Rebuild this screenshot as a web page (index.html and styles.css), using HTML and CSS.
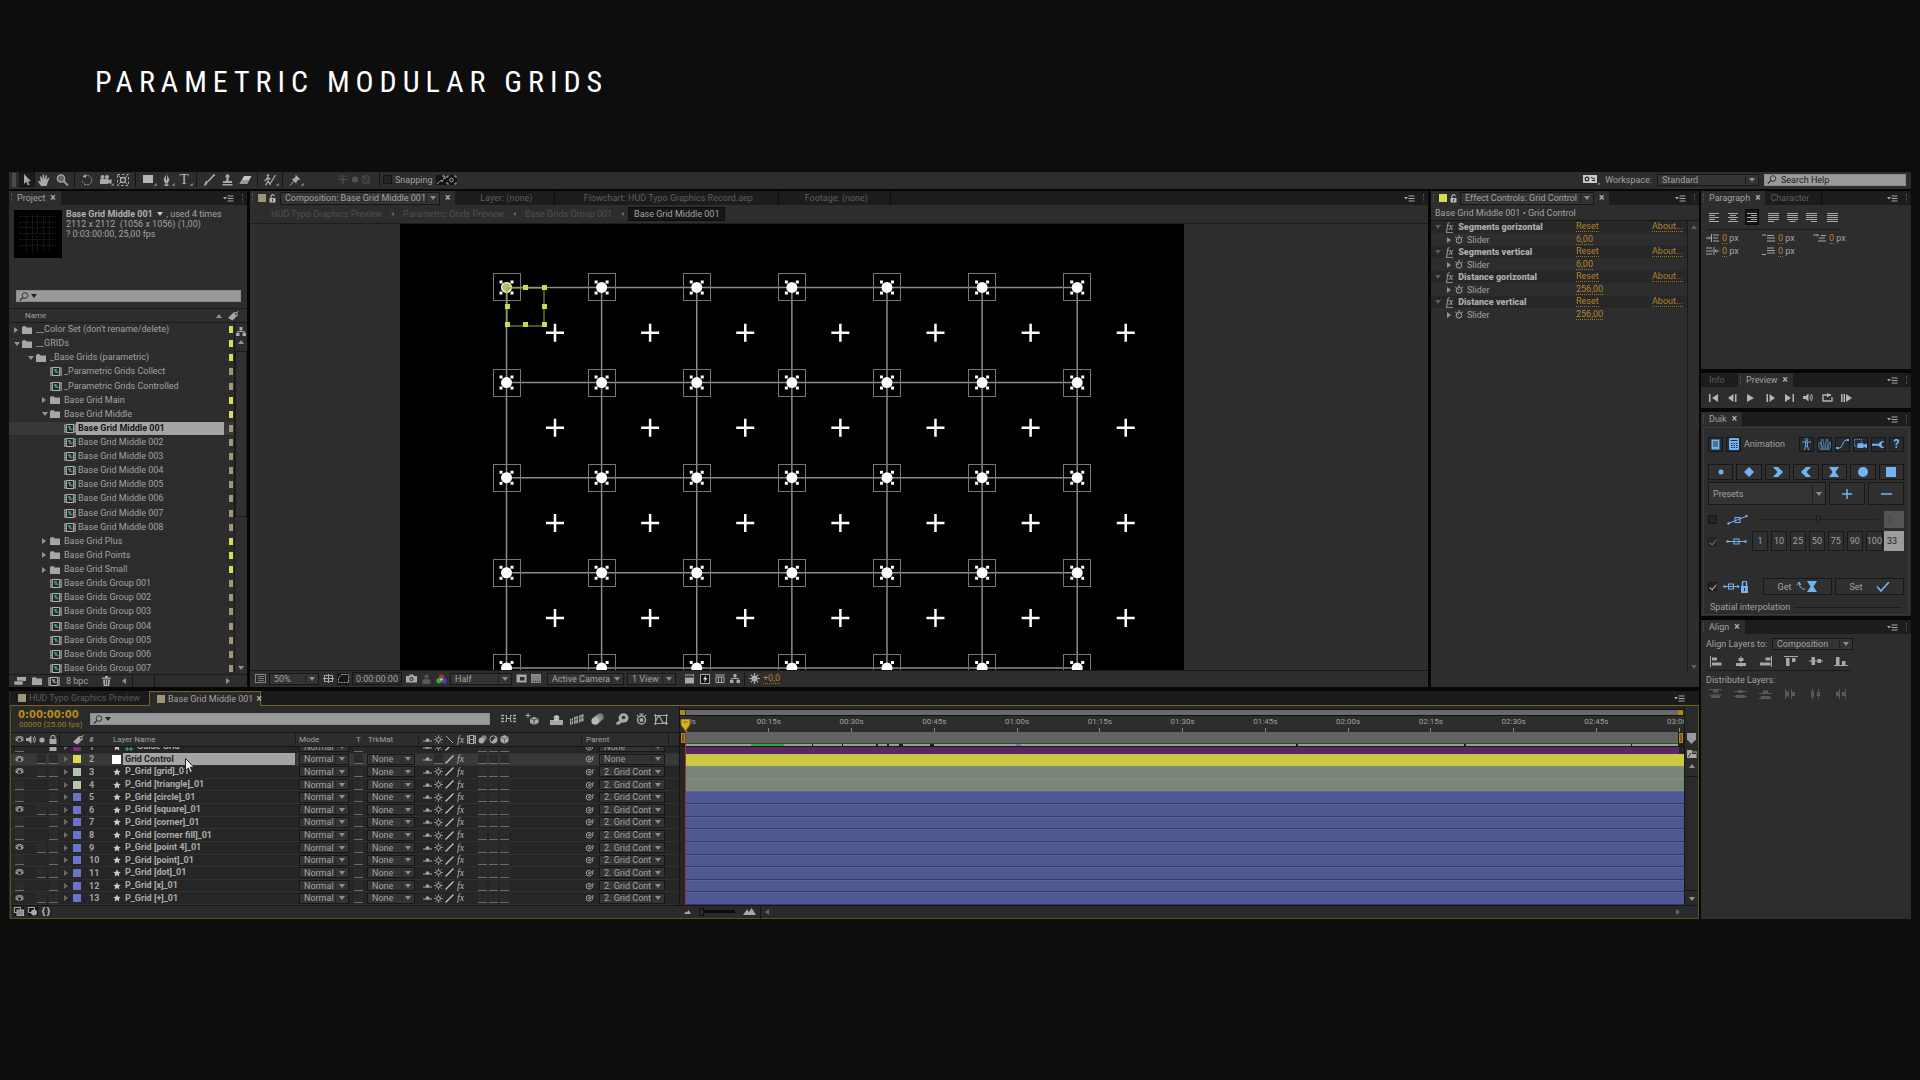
FILE: index.html
```html
<!DOCTYPE html>
<html lang="en">
<head>
<meta charset="utf-8">
<title>Parametric Modular Grids</title>
<link rel="stylesheet" href="styles.css">
</head>
<body>
<header class="title"><h1>PARAMETRIC MODULAR GRIDS</h1></header>
<main class="app">
  <nav class="toolbar" aria-label="Tools">
    <div class="tools">
      <span class="grip-bar"></span>
      <button class="tool on" data-icon="arrow" aria-label="Selection"></button>
      <button class="tool" data-icon="hand" aria-label="Hand"></button>
      <button class="tool" data-icon="zoom" aria-label="Zoom"></button>
      <span class="vsep"></span>
      <button class="tool" data-icon="rotate" aria-label="Rotate"></button>
      <button class="tool sub" data-icon="camera" aria-label="Camera"></button>
      <button class="tool" data-icon="pan" aria-label="Pan behind"></button>
      <span class="vsep"></span>
      <button class="tool sub" data-icon="rect" aria-label="Rectangle"></button>
      <button class="tool sub" data-icon="pen" aria-label="Pen"></button>
      <button class="tool sub type" aria-label="Type">T</button>
      <span class="vsep"></span>
      <button class="tool" data-icon="brush" aria-label="Brush"></button>
      <button class="tool" data-icon="stamp" aria-label="Clone stamp"></button>
      <button class="tool" data-icon="eraser" aria-label="Eraser"></button>
      <span class="vsep"></span>
      <button class="tool sub" data-icon="roto" aria-label="Roto brush"></button>
      <span class="vsep"></span>
      <button class="tool sub" data-icon="pin" aria-label="Puppet pin"></button>
    </div>
    <div class="axes"><span data-icon="axis1"></span><span data-icon="axis2"></span><span data-icon="axis3"></span></div>
    <span class="vsep"></span>
    <label class="snap"><input type="checkbox" class="chk"> Snapping</label>
    <span class="dark" data-icon="snap1"></span><span class="dark" data-icon="snap2"></span>
    <div class="right">
      <span data-icon="wsicon"></span>
      <label for="ws">Workspace:</label>
      <span class="sel ws"><select id="ws"><option>Standard</option></select></span>
      <span class="search help"><span data-icon="mag"></span><input type="text" value="Search Help" aria-label="Search Help"></span>
    </div>
  </nav>

  <div class="left">
    <div class="top">
      <section class="panel project">
        <div class="tabs"><div class="tab on"><i class="grip"></i>Project<b>×</b></div><span class="menu" data-icon="menu"></span><i class="grip end"></i></div>
        <div class="info">
          <svg class="thumb" viewBox="0 0 48 48" aria-hidden="true"><rect width="48" height="48" fill="#000"/><path d="M5 6.500h37M5 12.500h37M5 17.500h37M5 23.500h37M5 29.500h37M5 35.500h37M12.500 5v37M18.500 5v37M23.500 5v37M29.500 5v37M35.500 5v37" stroke="#1b1b1b" stroke-dasharray="3 1"/></svg>
          <p><strong>Base Grid Middle 001</strong> <i class="dn"></i> , used 4 times<br>2112 x 2112&nbsp; (1056 x 1056) (1,00)<br>? 0:03:00:00, 25,00 fps</p>
        </div>
        <label class="search find"><span data-icon="mag"></span><i class="dn"></i><input type="text" aria-label="Search project"></label>
        <div class="treehead"><span>Name</span><i class="up"></i><span class="tagc" data-icon="tag"></span></div>
        <div class="treewrap">
          <div class="clip"><ul class="tree" id="tree"></ul></div>
          <div class="vscroll"><span data-icon="flow"></span><i class="up"></i><div class="thumbbar"></div><i class="dn"></i></div>
        </div>
        <div class="pfoot"><span data-icon="interp"></span><span data-icon="folder"></span><span data-icon="compgray"></span><span class="bpc">8 bpc</span><span data-icon="trash"></span><i class="lf"></i><div class="hthumb"></div><i class="rt"></i></div>
      </section>

      <section class="panel comp">
        <div class="tabs">
          <div class="tab on"><i class="grip"></i><i class="sw tan"></i><span data-icon="lock"></span><span class="sel ctab"><select aria-label="Composition"><option>Composition: Base Grid Middle 001</option></select></span><b>×</b></div>
          <div class="tab t1">Layer: (none)</div><div class="tab t2">Flowchart: HUD Typo Graphics Record.aep</div><div class="tab t3">Footage: (none)</div>
          <span class="menu" data-icon="menu"></span><i class="grip end"></i>
        </div>
        <div class="crumbs"><a href="#">HUD Typo Graphics Preview</a><i class="lf"></i><a href="#">Parametric Grids Preview</a><i class="lf"></i><a href="#">Base Grids Group 001</a><i class="lf"></i><a href="#" class="cur">Base Grid Middle 001</a></div>
        <div class="viewer"><svg id="canvas" width="784" height="446" viewBox="400 224 784 446" role="img" aria-label="Composition view"></svg></div>
        <div class="vfoot">
          <span data-icon="mon"></span>
          <span class="sel w50"><select aria-label="Zoom"><option>50%</option></select></span>
          <span data-icon="safe"></span><span class="dark" data-icon="mask"></span>
          <button class="time">0:00:00:00</button>
          <span data-icon="photo"></span><span class="faint" data-icon="person"></span><span data-icon="rgb"></span>
          <span class="sel w62"><select aria-label="Resolution"><option>Half</option></select></span>
          <span data-icon="roi"></span><span data-icon="check"></span>
          <span class="sel w77"><select aria-label="Camera"><option>Active Camera</option></select></span>
          <span class="sel w49"><select aria-label="Views"><option>1 View</option></select></span>
          <span class="par" data-icon="par"></span><span data-icon="fast"></span><span data-icon="tl"></span><span data-icon="flow"></span><span class="vsep"></span><span data-icon="sun"></span><a class="val" href="#">+0,0</a>
        </div>
      </section>

      <section class="panel fx">
        <div class="tabs"><div class="tab on"><i class="grip"></i><i class="sw yel"></i><span data-icon="lock"></span><span class="sel ftab"><select aria-label="Effect Controls"><option>Effect Controls: Grid Control</option></select></span><b>×</b></div><span class="menu" data-icon="menu"></span><i class="grip end"></i></div>
        <div class="fxname">Base Grid Middle 001 • Grid Control</div>
        <div class="fxwrap"><div class="fxrows" id="fx"></div><div class="vscroll"><i class="up"></i><i class="dn"></i></div></div>
      </section>
    </div>

    <section class="timeline">
      <div class="tltabs">
        <div class="tab"><i class="sw tan"></i>HUD Typo Graphics Preview</div>
        <div class="tab on"><i class="sw tan"></i>Base Grid Middle 001<b>×</b></div>
        <div class="rest"><span class="menu" data-icon="menu"></span></div>
      </div>
      <div class="tlbody">
        <div class="layers">
          <div class="tlhead">
            <div class="tc"><strong>0:00:00:00</strong><small>00000 (25.00 fps)</small></div>
            <label class="search lfind"><span data-icon="mag"></span><i class="dn"></i><input type="text" aria-label="Search layers"></label>
            <div class="tlicons"><span data-icon="mini"></span><span data-icon="draft"></span><span data-icon="shy"></span><span data-icon="blend"></span><span data-icon="blur"></span><span data-icon="brain"></span><span data-icon="watchbig"></span><span data-icon="graph"></span></div>
          </div>
          <table>
            <thead><tr><th data-icon="eye"></th><th data-icon="speaker"></th><th data-icon="dot"></th><th data-icon="padlock"></th><th class="ls"></th><th data-icon="tag"></th><th class="num">#</th><th class="nm">Layer Name</th><th class="ls md">Mode</th><th class="tt">T</th><th class="tk">TrkMat</th><th class="ls sws"><span data-icon="shysw"></span><span data-icon="sunsw"></span><span data-icon="slashb"></span><em>fx</em><span data-icon="film"></span><span data-icon="blursw"></span><span data-icon="adj"></span><span data-icon="cube"></span></th><th class="ls pr">Parent</th><th class="ls"></th></tr></thead>
            <tbody id="layers"></tbody>
          </table>
        </div>
        <div class="graph">
          <div class="nav"><i></i><div></div><i></i></div>
          <div class="ruler" id="ruler"></div>
          <div class="work"><i></i><div class="area"><div class="cache" id="cache"></div></div><i></i></div>
          <div class="bars" id="bars"></div>
          <span class="cti" data-icon="cti"></span>
        </div>
        <div class="tscroll"><span class="mk" data-icon="shield"></span><span data-icon="cbtn"></span><i class="up"></i><div class="track"></div><i class="dn"></i></div>
      </div>
      <div class="tlfoot"><div class="lft"><span class="dark" data-icon="tg1"></span><span class="dark" data-icon="tg2"></span><span data-icon="tg3"></span></div><span data-icon="mt1"></span><input type="range" class="zoomr" min="0" max="100" value="0" aria-label="Timeline zoom"><span data-icon="mt2"></span><span class="vsep"></span><i class="lf"></i><i class="rt"></i></div>
      <span class="cursor" data-icon="cursor"></span>
    </section>
  </div>

  <aside class="side">
    <section class="panel para">
      <div class="tabs"><div class="tab on"><i class="grip"></i>Paragraph<b>×</b></div><div class="tab ch">Character</div><span class="menu" data-icon="menu"></span><i class="grip end"></i></div>
      <div class="aligns"><button data-icon="al1" aria-label="Left"></button><button data-icon="al2" aria-label="Center"></button><button class="on" data-icon="al3" aria-label="Right"></button><button class="g" data-icon="al4" aria-label="Justify last left"></button><button data-icon="al5" aria-label="Justify last center"></button><button data-icon="al6" aria-label="Justify last right"></button><button class="g" data-icon="al7" aria-label="Justify all"></button></div>
      <div class="indents"><span data-icon="in1"></span><p><a class="val" href="#">0</a> px</p><span data-icon="in2"></span><p><a class="val" href="#">0</a> px</p><span data-icon="in3"></span><p><a class="val" href="#">0</a> px</p><span data-icon="in4"></span><p><a class="val" href="#">0</a> px</p><span data-icon="in5"></span><p><a class="val" href="#">0</a> px</p></div>
    </section>
    <section class="panel prev">
      <div class="tabs"><div class="tab inf">Info</div><div class="tab on"><i class="grip"></i>Preview<b>×</b></div><span class="menu" data-icon="menu"></span><i class="grip end"></i></div>
      <div class="play"><button data-icon="p1" aria-label="First frame"></button><button data-icon="p2" aria-label="Previous frame"></button><button data-icon="p3" aria-label="Play"></button><button data-icon="p4" aria-label="Next frame"></button><button data-icon="p5" aria-label="Last frame"></button><button data-icon="speaker" aria-label="Audio"></button><button data-icon="loop" aria-label="Loop"></button><button data-icon="ram" aria-label="RAM preview"></button></div>
    </section>
    <section class="panel duik">
      <div class="tabs"><div class="tab on"><i class="grip"></i>Duik<b>×</b></div><span class="menu" data-icon="menu"></span><i class="grip end"></i></div>
      <div class="dbody">
        <div class="drow d1"><button data-icon="doc" aria-label="Notes"></button><button data-icon="calc" aria-label="Calculator"></button><span class="an">Animation</span><button data-icon="man" aria-label="Rigging"></button><button data-icon="palm" aria-label="Automation"></button><button data-icon="curve" aria-label="Animation"></button><button data-icon="cam2" aria-label="Camera"></button><button data-icon="wrench" aria-label="Settings"></button><button class="q" aria-label="Help">?</button></div>
        <div class="drow d2"><button data-icon="k1" aria-label="Roving"></button><button data-icon="k2" aria-label="Linear"></button><button data-icon="k3" aria-label="Ease in"></button><button data-icon="k4" aria-label="Ease out"></button><button data-icon="k5" aria-label="Easy ease"></button><button data-icon="k6" aria-label="Continuous"></button><button data-icon="k7" aria-label="Hold"></button></div>
        <div class="drow d3"><span class="sel pres"><select aria-label="Presets"><option>Presets</option></select></span><button data-icon="plus" aria-label="Add"></button><button data-icon="minus" aria-label="Remove"></button></div>
        <div class="drow d4"><input type="checkbox" class="chk" aria-label="Velocity"><span data-icon="vel1"></span><input type="range" class="rng" value="50" aria-label="Velocity value"><input type="text" class="nv off" value="0" aria-label="Velocity number"></div>
        <div class="drow d5"><input type="checkbox" class="chk dis" checked aria-label="Influence"><span data-icon="vel2"></span><button>1</button><button>10</button><button>25</button><button>50</button><button>75</button><button>90</button><button>100</button><input type="text" class="nv" value="33" aria-label="Influence number"></div>
        <div class="drow d6"><input type="checkbox" class="chk" checked aria-label="Lock influence"><span data-icon="vel3"></span><button>Get <span data-icon="getk"></span></button><button>Set <span data-icon="tick"></span></button></div>
        <div class="spat">Spatial interpolation<i></i></div>
      </div>
    </section>
    <section class="panel align">
      <div class="tabs"><div class="tab on"><i class="grip"></i>Align<b>×</b></div><span class="menu" data-icon="menu"></span><i class="grip end"></i></div>
      <div class="alto"><label for="alto">Align Layers to:</label><span class="sel wal"><select id="alto"><option>Composition</option></select></span></div>
      <div class="aicons"><button data-icon="a1" aria-label="Align left"></button><button data-icon="a2" aria-label="Align center"></button><button data-icon="a3" aria-label="Align right"></button><button data-icon="a4" aria-label="Align top"></button><button data-icon="a5" aria-label="Align middle"></button><button data-icon="a6" aria-label="Align bottom"></button></div>
      <p class="dist">Distribute Layers:</p>
      <div class="aicons dim"><button data-icon="b1" aria-label="Distribute top"></button><button data-icon="b2" aria-label="Distribute middle"></button><button data-icon="b3" aria-label="Distribute bottom"></button><button data-icon="b4" aria-label="Distribute left"></button><button data-icon="b5" aria-label="Distribute center"></button><button data-icon="b6" aria-label="Distribute right"></button></div>
    </section>
  </aside>
</main>
<script src="app.js"></script>
</body>
</html>
```
FILE: styles.css
```css
* { box-sizing: border-box; }
body { margin: 0; background: #0d0d0d; color: #a2a2a2; font: 9px/12px Roboto, "Liberation Sans", sans-serif; overflow-x: hidden; }
button, input, select { font: inherit; color: inherit; margin: 0; padding: 0; border: 0; background: none; outline: 0; }
a { color: inherit; text-decoration: none; }
p, ul, h1 { margin: 0; padding: 0; }
svg { display: block; }
[data-icon] { display: flex; align-items: center; justify-content: center; flex: none; color: #a8a8a8; }

.title { padding: 64px 95px 72px; }
.title h1 { font: 400 30px/36px "Roboto Condensed", Roboto, sans-serif; letter-spacing: 6px; color: #fff; }

.app { margin: 0 9px; display: grid; grid-template-columns: minmax(0, 1fr) 210px; gap: 2px; background: #060606; }

/* triangles */
.dn, .up, .lf, .rt { display: inline-block; width: 0; height: 0; border: 3px solid transparent; flex: none; }
.dn { border-top: 4px solid #929292; border-bottom: 0; }
.up { border-bottom: 4px solid #929292; border-top: 0; }
.lf { border-right: 4px solid #929292; border-left: 0; }
.rt { border-left: 4px solid #929292; border-right: 0; }

/* toolbar */
.toolbar { grid-column: 1 / -1; height: 17px; padding-bottom: 2px; background: #2d2d2d; display: flex; align-items: center; }
.tools { display: flex; align-items: center; width: 329px; }
.tool { width: 18px; height: 15px; position: relative; }
.tool.on { background: #1c1c1c; border: 1px solid #111; width: 16px; }
.tool.sub::after { content: ""; position: absolute; right: 0; bottom: 0; border: 2px solid transparent; border-left-color: #999; border-right: 0; transform: rotate(45deg); }
.type { font: 15px/15px "Liberation Serif", serif; color: #b4b4b4; }
.grip-bar { width: 4px; height: 14px; background: #4c4c4c; margin: 0 3px; }
.vsep { width: 1px; height: 15px; background: #161616; margin: 0 3px; flex: none; }
.axes { display: flex; gap: 3px; width: 38px; opacity: .3; }
.snap { display: flex; align-items: center; gap: 3px; margin-right: 3px; }
.dark { background: #141414; }
.right { margin-left: auto; display: flex; align-items: center; gap: 5px; padding-right: 5px; }
.right [data-icon="wsicon"] { color: #c8c8c8; }

.chk { appearance: none; width: 9px; height: 9px; background: #232323; border: 1px solid #141414; display: grid; place-items: center; flex: none; }
.chk:checked::after { content: ""; width: 3px; height: 6px; border: solid #b5b5b5; border-width: 0 1px 1px 0; transform: rotate(40deg); }
.chk.dis { opacity: .5; }

.sel { position: relative; display: flex; background: #333; border: 1px solid #161616; height: 12px; flex: none; align-items: center; box-shadow: 0 0 0 1px #353535 inset; }
.sel select { appearance: none; width: 100%; height: 10px; line-height: 10px; padding: 0 12px 0 4px; }
.sel::before { content: ""; position: absolute; right: 12px; top: 1px; bottom: 1px; border-left: 1px solid #1e1e1e; }
.sel::after { content: ""; position: absolute; right: 3px; border: 3px solid transparent; border-top: 4px solid #8c8c8c; border-bottom: 0; }
.ws { width: 102px; }
.search { background: #9b9a9b; display: flex; align-items: center; gap: 2px; padding-left: 2px; height: 12px; border: 1px solid #8a8a8a; color: #1c1c1c; }
.search input { flex: 1; min-width: 0; }
.search [data-icon] { color: #333; }
.search .dn { border-top-color: #222; }
.help { width: 142px; gap: 4px; }

/* panels */
.left { display: flex; flex-direction: column; gap: 4px; min-width: 0; }
.top { display: grid; grid-template-columns: 238px minmax(0, 1fr) 268px; gap: 3px; }
.panel { background: #2d2d2d; min-width: 0; display: flex; flex-direction: column; }
.tabs { background: #1c1c1c; height: 14px; display: flex; align-items: center; flex: none; }
.tab { height: 14px; display: flex; align-items: center; padding: 0 5px 0 8px; color: #5c5c5c; white-space: nowrap; }
.tab.on { background: #2d2d2d; color: #a2a2a2; padding-left: 2px; }
.tab b { font-weight: 700; font-size: 10px; margin-left: 5px; color: #b0b0b0; }
.grip { width: 2px; height: 8px; border-left: 1px dotted #555; margin-right: 4px; }
.grip.end { margin: 0 3px 0 8px; }
.menu { margin-left: auto; }
.sw { width: 8px; height: 8px; flex: none; }
.tan { background: #a1947b; }
.yel { background: #d9dd52; }

/* project */
.info { display: flex; height: 85px; padding: 5px 5px; gap: 4px; }
.info p { line-height: 10px; white-space: nowrap; margin-top: -1px; }
.info strong { color: #b0b0b0; }
.thumb { width: 48px; height: 48px; }
.info .dn { border-top-color: #ccc; margin: 0 1px 1px 2px; }
.find { margin: 0 6px 0 7px; }
.treehead { margin-top: 6px; height: 15px; border: solid #1a1a1a; border-width: 1px 0; display: flex; align-items: center; padding: 0 8px 0 16px; gap: 6px; font-size: 8px; }
.treehead .up { margin-left: auto; }
.treewrap { display: flex; height: 351px; }
.clip { flex: 1; overflow: hidden; border-right: 1px solid #191919; }
.tree { list-style: none; height: 353px; display: grid; grid-auto-rows: 1fr; }
.tree li { display: flex; align-items: center; white-space: nowrap; border-bottom: 1px solid #292929; padding-right: 1px; }
.tree .ar { width: 8px; display: flex; }
.tree .fic { width: 14px; justify-content: flex-start; }
.tree .nme { flex: 1; margin-right: 5px; line-height: 13px; }
.tree .sel1 { background: #383838; }
.tree .sel1 .nme { background: #a4a3a5; color: #141414; font-weight: 700; padding-left: 2px; margin-left: -2px; }
.tree .lb { width: 4px; height: 7px; }
.l0 { padding-left: 5px; } .l1 { padding-left: 19px; } .l2 { padding-left: 33px; } .l3 { padding-left: 47px; }
.vscroll { width: 12px; display: flex; flex-direction: column; align-items: center; padding: 4px 0 4px; gap: 4px; }
.vscroll .thumbbar { width: 12px; height: 166px; border: 1px solid #191919; background: #303030; margin-top: 3px; }
.vscroll .dn { margin-top: auto; }
.pfoot { height: 13px; border-top: 1px solid #1a1a1a; display: flex; align-items: center; padding: 0 17px 0 5px; gap: 6px; }
.pfoot .bpc { width: 30px; }
.pfoot .lf { margin-left: 5px; }
.pfoot .hthumb { width: 23px; height: 12px; border: solid #161616; border-width: 0 1px; }
.pfoot .rt { margin-left: auto; }

/* composition */
.ctab { width: 160px; margin-left: 4px; height: 13px; }
.comp [data-icon="lock"], .fx [data-icon="lock"] { margin-left: 3px; }
.tab.t1, .tab.t2, .tab.t3 { justify-content: center; border-right: 1px solid #0e0e0e; }
.t1 { width: 100px; } .t2 { width: 224px; } .t3 { width: 112px; }
.crumbs { height: 19px; display: flex; align-items: center; padding-left: 21px; gap: 9px; border-bottom: 1px solid #1d1d1d; color: #505050; white-space: nowrap; }
.crumbs .lf { border-width: 2px 3px 2px 0; border-right-color: #666; }
.crumbs .cur { margin-left: -5px; padding: 0 5px; background: #171717; border: 1px solid #0d0d0d; color: #a2a2a2; }
.viewer { height: 446px; padding-left: 150px; overflow: hidden; background: #2e2e2e; }
#canvas { background: #000; }
.vfoot { height: 17px; border-top: 1px solid #161616; display: flex; align-items: center; padding: 0 0 1px 4px; gap: 3px; white-space: nowrap; }
.w50 { width: 50px; } .w62 { width: 62px; } .w77 { width: 77px; margin-left: 2px; } .w49 { width: 49px; }
.vfoot .time { border: 1px solid #161616; height: 13px; width: 50px; }
.vfoot [data-icon] { width: 12px; height: 12px; }
.vfoot .par { margin: 0 1px 0 4px; }
.vfoot .faint { opacity: .35; }
.vfoot .vsep { margin: 0; }
.val { color: #b4842c; border-bottom: 1px dotted #9c7428; line-height: 9px; }

/* effect controls */
.ftab { width: 134px; margin-left: 3px; height: 13px; }
.fxname { height: 16px; line-height: 16px; padding-left: 4px; border-bottom: 1px solid #161616; }
.fxwrap { flex: 1; display: flex; }
.fxwrap .vscroll { border-left: 1px solid #191919; margin-bottom: 14px; }
.fxwrap .up, .fxwrap .dn { opacity: .5; }
.fxrows { flex: 1; }
.fxrows > div { display: grid; grid-template-columns: 145px 1fr 35px; align-items: center; height: 13px; }
.fxrows > .h { background: #272727; height: 12px; font-weight: 700; }
.fxrows .c { display: flex; align-items: center; gap: 5px; padding-left: 4px; }
.fxrows .p .c { padding-left: 16px; gap: 4px; }
.fxrows .h strong { color: #acacac; }
.fxrows .val { justify-self: start; font-weight: 400; }
em { font: italic 10px/10px "Liberation Serif", serif; border-bottom: 1px solid #888; color: #b4b4b4; }

/* timeline */
.timeline { position: relative; display: flex; flex-direction: column; background: #2a2a2a; }
.tltabs { display: flex; background: #1b1b1b; height: 15px; margin-left: 1px; }
.tltabs .tab { height: 15px; border-bottom: 1px solid #756425; gap: 3px; width: 139px; }
.tltabs .on { border: 1px solid #756425; border-bottom: 0; padding: 0 2px 0 7px; width: 112px; background: #2a2a2a; }
.tltabs .on b { margin-left: 0; }
.rest { flex: 1; border-bottom: 1px solid #756425; display: flex; align-items: center; padding-right: 14px; }
.tlbody { display: grid; grid-template-columns: 669px minmax(0, 1fr) 14px; border: solid #5b4f24; border-width: 0 1px; margin-left: 1px; }
.layers { border-right: 1px solid #141414; overflow: hidden; }
.tlhead { height: 26px; display: flex; align-items: center; padding-left: 7px; }
.tc { width: 72px; line-height: 10px; }
.tc strong { display: block; font: 700 10px/11px "DejaVu Sans", sans-serif; color: #b98c14; }
.tc small { font-size: 8px; color: #a07a1c; padding-left: 1px; line-height: 10px; display: block; }
.lfind { width: 400px; }
.tlicons { display: flex; gap: 7px; margin-left: 10px; }
.tlicons [data-icon="shy"], .tlicons [data-icon="brain"] { margin-left: 4px; }
table { display: block; }
thead, tbody { display: block; }
tr { display: grid; grid-template-columns: 14px 11px 11px 12px 13px 12px 27px 186px 53px 16px 52px 163px 87px 11px; align-items: center; }
th, td { padding: 0; text-align: left; font-weight: 400; min-width: 0; }
thead tr { height: 15px; background: #2d2d2d; border: solid #161616; border-width: 1px 0; font-size: 8px; line-height: 13px; }
th.ls { border-left: 1px solid #191919; height: 11px; line-height: 11px; }
.num { padding-left: 5px; font-weight: 700; }
.nm { display: flex; align-items: center; }
th.nm, th.tk { padding-left: 2px; }
th.md { padding-left: 3px; margin-left: -2px; }
th.tt { padding-left: 6px; }
th.pr { padding-left: 4px; }
.sws { display: grid; grid-template-columns: repeat(8, 11px); justify-items: center; align-items: center; padding-left: 4px; }
th.sws { padding-left: 3px; }
.sws em { border: 0; }
tbody { height: 158px; display: flex; flex-direction: column; justify-content: flex-end; overflow: hidden; background: #262626; }
tbody tr { flex: 0 0 8%; min-height: 0; max-height: 8%; grid-template-rows: 100%; border-bottom: 1px solid #303030; }
tbody .selrow { background: #393939; }
tbody td:nth-child(-n+4), tbody .tt { display: flex; justify-content: center; }
tbody td:first-child, thead th:first-child { padding-left: 2px; }
.box { width: 9px; height: 10px; background: #2b2b2b; border-bottom: 1px solid #6c6c6c; display: flex; align-items: center; justify-content: center; }
.arc { display: flex; padding-left: 5px; }
.arc .rt { border-left-color: #6c6c6c; }
.lab { width: 8px; height: 8px; margin-left: 1px; }
td.nm { padding-right: 2px; }
td.nm > span { width: 12px; }
td.nm strong { flex: 1; color: #acacac; line-height: 11px; padding-left: 2px; white-space: nowrap; }
.selrow td.nm strong { background: #a3a3a3; color: #222; line-height: 12px; }
.nullb { width: 9px !important; height: 9px; background: #fff; margin: 0 2px 0 1px; }
tbody .sel { width: 50px; height: 11px; margin-left: 2px; }
tbody .sel::before { border-color: #262626; }
tbody td.tk .sel { width: 48px; margin-left: 1px; }
tbody .pr { display: flex; align-items: center; gap: 5px; padding-left: 4px; }
tbody .pr .sel { width: 66px; margin: 0; }
.graph { position: relative; overflow: hidden; background: #262626; }
.nav { margin-top: 3px; height: 7px; background: #6a6a6a; border: solid #111; border-width: 1px 0; display: flex; justify-content: space-between; }
.nav i { width: 6px; background: #b0851c; border-right: 1px solid #333; }
.ruler { height: 16px; display: flex; background: #2d2d2d; font-size: 8px; line-height: 12px; }
.ruler div { flex: 0 0 calc((100% - 11px) / 12); text-align: center; }
.ruler div:first-child { margin-left: calc((100% - 11px) / -24 + 6px); }
.ruler div::after { content: ""; display: block; width: 1px; height: 4px; background: #888; margin: 0 auto; }
.work { height: 15px; display: flex; justify-content: space-between; border-bottom: 1px solid #161616; background: #1e1e1e; }
.work > i { width: 4px; margin: 1px 1px 3px; background: #7a5c17; border: 1px solid #b0851c; }
.work .area { flex: 1; background: #626262; position: relative; }
.cache { position: absolute; left: 0; right: 0; bottom: 0; height: 3px; background: #8da88c; border-top: 1px solid #3b463b; }
.cache i { position: absolute; top: 0; bottom: 0; }
.bars { height: 158px; display: flex; flex-direction: column; justify-content: flex-end; overflow: hidden; padding-left: 6px; background: #262626; }
.bars div { flex: 0 0 8%; border-bottom: 1px solid #343a64; border-top: 1px solid #5a6299; background: #505894; }
.bars .pu { background: #5b2762; border: 0; margin-right: 5px; }
.bars .ye { background: #cdc842; border-color: #c8c15c #55551f; }
.bars .gr { background: #7a8678; border-color: #7f8b80 #4d574c; }
.cti { position: absolute; left: 1px; top: 13px; }
.cti svg { position: relative; z-index: 1; }
.cti::after { content: ""; position: absolute; left: 4px; top: 0; height: 190px; width: 1px; background: #a82c3c; }
.tscroll { display: flex; flex-direction: column; align-items: center; padding: 27px 1px 4px; gap: 6px; border-left: 1px solid #161616; }
.tscroll .up { margin-top: -1px; }
.tscroll .track { flex: 1; width: 12px; border: solid #151515; border-width: 1px 0; margin-top: 2px; }
.tlfoot { height: 14px; border: solid #5b4f24; border-width: 0 1px 1px; margin-left: 1px; display: flex; align-items: center; gap: 8px; box-shadow: 0 1px #161616 inset; padding-right: 18px; }
.lft { width: 665px; display: flex; gap: 4px; padding-left: 3px; }
.zoomr { appearance: none; width: 36px; height: 10px; background: linear-gradient(#0c0c0c, #0c0c0c) 0 50% / 100% 3px no-repeat; }
.zoomr::-webkit-slider-thumb { appearance: none; width: 5px; height: 8px; background: #2a2a2a; border: 1px solid #111; }
.tlfoot .rt { margin-left: auto; opacity: .6; }
.tlfoot .lf { opacity: .6; }
.tlfoot .vsep { margin: 0 -4px; }
.cursor { position: absolute; left: 176px; top: 67px; }

/* side column */
.side { display: flex; flex-direction: column; gap: 4px; }
.para { height: 178px; }
.tab.ch { border-right: 1px solid #0e0e0e; width: 57px; padding-left: 5px; }
.aligns { display: flex; gap: 5px; padding: 4px 0 4px; margin: 0 71px 0 6px; border-bottom: 1px solid #1a1a1a; }
.aligns button { width: 14px; height: 16px; }
.aligns .on { background: #161616; border: 1px solid #0a0a0a; }
.aligns .g { margin-left: 2px; }
.indents { display: grid; grid-template-columns: 13px 37px 13px 32px 13px 1fr; column-gap: 3px; row-gap: 1px; padding: 2px 5px; align-items: center; }
.inf { width: 37px; }
.play { height: 21px; display: flex; align-items: center; padding-left: 3px; gap: 1px; }
.play button { width: 18px; height: 15px; color: #b4b4b4; }
.dbody { border: 1px solid #3c3c3c; margin: 1px 2px 1px; padding: 8px 4px 0; display: flex; flex-direction: column; }
.dbody [data-icon], .dbody .q { color: #72b4f2; }
.drow { display: flex; align-items: center; }
.drow button { border: 1px solid #171717; background: #303030; display: flex; align-items: center; justify-content: center; }
.d1 { gap: 3px; height: 16px; }
.d1 button { width: 15px; height: 15px; background: #242a30; }
.d1 .an { flex: 1; }
.d1 .q { font: 700 12px/13px Roboto, sans-serif; }
.d2 { gap: 3px; margin-top: 12px; }
.d2 button { flex: 1; height: 16px; }
.d3 { gap: 3px; margin-top: 2px; }
.d3 .pres { flex: 1; height: 23px; }
.d3 button { width: 36px; height: 23px; }
.d4 { height: 18px; margin-top: 5px; gap: 10px; }
.d4 .rng { flex: 1; min-width: 0; appearance: none; height: 10px; background: linear-gradient(#222, #222) 0 50% / 100% 1px no-repeat; }
.rng::-webkit-slider-thumb { appearance: none; width: 5px; height: 8px; background: #2d2d2d; border: 1px solid #1b1b1b; border-radius: 2px; }
.nv { width: 20px; height: 20px; background: #9c9c9c; color: #222; padding-left: 3px; flex: none; }
.nv.off { background: #555; color: #444; height: 17px; margin-left: -4px; }
.d5 { margin-top: 3px; gap: 3px; }
.d5 [data-icon] { margin: 0 2px 0 6px; }
.d5 button { flex: 1 0 15px; height: 20px; }
.d5 .nv { margin-left: -2px; }
.d6 { margin-top: 27px; gap: 3px; }
.d6 > [data-icon] { margin: 0 11px 0 3px; }
.d6 button { flex: 1; height: 17px; gap: 5px; }
.spat { display: flex; align-items: center; gap: 4px; padding: 6px 3px 1px 2px; }
.spat i { flex: 1; border-top: 1px solid #1b1b1b; }
.align { flex: 1; }
.alto { display: flex; align-items: center; justify-content: space-between; padding: 4px 58px 2px 5px; }
.wal { width: 81px; }
.aicons { display: flex; gap: 10px; margin: 0 60px 0 5px; padding: 3px 2px 3px; border-bottom: 1px solid #1b1b1b; }
.aicons button { width: 15px; height: 12px; }
.aicons.dim { border: 0; opacity: .35; padding-top: 1px; }
.dist { padding: 3px 5px 1px; }
```
FILE: app.js
```js
// name: [width, height, markup]
const lines = (...r) => '<path d="' + r.map(([x, w], i) => `M${x} ${i * 2 + 1.5}h${w}`).join('') + '" stroke="currentColor" stroke-width="1.2"/>';
const S = 'fill="none" stroke="currentColor"', F = 'fill="currentColor"';
const film = c => `<rect width="12" height="9" fill="#8e8e8e"/><rect x="2.500" y="0" width="7" height="9" fill="#b4b4b4"/><rect x="3" y="1" width="6" height="7" fill="#1c2a28"/><path d="M4 3h2v3" stroke="${c}" fill="none" stroke-width="1.500"/><rect x="7" y="4.500" width="1.500" height="2" fill="#a05a3a"/><path d="M1.200 0v9M10.800 0v9" stroke="#444" stroke-dasharray="1 1"/>`;
const ICONS = {
  arrow: [8, 12, `<path d="M1 0v10l2.300-2.200L5 11.500l1.500-.7L5 7.300h3z" ${F}/>`],
  hand: [12, 12, `<path d="M3 12L0 7.500l1-.8 1.700 1.300L2 2.500l1.200-.3L4.500 5.500 4.800.6h1.300l.3 4.700L8 1.300l1.200.3L8.500 6l2-2.500 1 .6L9.500 9l-1 3z" ${F}/>`],
  zoom: [13, 12, `<circle cx="5" cy="4.500" r="3.700" fill="#666" stroke="#aaa" stroke-width="1.200"/><path d="M7.500 7l4.500 4.500" stroke="#999" stroke-width="2"/>`],
  rotate: [12, 12, `<path d="M3.500 2.200A4.700 4.700 0 1 1 1.500 7.500" ${S} stroke-dasharray="2 1"/><path d="M5 0v4L1.500 2.500z" ${F}/>`],
  camera: [13, 12, `<circle cx="3.500" cy="3" r="2" ${F}/><circle cx="8" cy="3" r="2" ${F}/><path d="M1 5h8.500v1.200L12.500 5v5L9.500 8.800V10H1z" ${F}/>`],
  pan: [12, 12, `<rect x=".5" y=".5" width="11" height="11" ${S} stroke-dasharray="2.500 2"/><circle cx="6" cy="6" r="2.500" ${S} stroke-width="1.300"/><path d="M1.500 1.500l2.500 2.500M10.500 1.500L8 4M1.500 10.500L4 8M10.500 10.500L8 8" ${S}/>`],
  rect: [10, 9, `<rect width="10" height="8" fill="#b4b4b4"/>`],
  pen: [9, 12, `<path d="M4.500 0L1.500 5.500l1.700 4h2.600l1.700-4zM2.500 10.200h4V12h-4z" ${F}/><path d="M4.500 1v5" stroke="#2d2d2d"/>`],
  brush: [12, 12, `<path d="M11.500.5L5 7.500" stroke="currentColor" stroke-width="1.600"/><path d="M5.500 7L3 11.500H0c2-.5 1.500-3 3-4.500z" ${F}/>`],
  stamp: [11, 12, `<circle cx="5.500" cy="2.200" r="2" ${F}/><path d="M4.700 3h1.600l.6 4H10v2H1V7h3zM.5 10h10v1.500H.5z" ${F}/>`],
  eraser: [13, 10, `<path d="M5 1h7.500L8 9H.5z" fill="#c4c4c4"/><path d="M.5 9L2.700 5h7.500L8 9z" fill="#999"/>`],
  roto: [14, 12, `<circle cx="5" cy="1.500" r="1.300" ${F}/><path d="M5 3L3 5.500 1.500 7M5 3v4l-2.500 4.500M5 7l2.500 4M5.500 4l2 1.500M12.500 1L7 10" ${S} stroke-width="1.300"/>`],
  pin: [12, 12, `<path d="M6.500.5l5 5-2 .3-2 2-.2 2L2.500 5l2-.2 2-2z" ${F}/><path d="M4.500 7.500L1 11.500" ${S}/>`],
  axis1: [10, 9, `<path d="M5 0v9M.5 4.500h9M1 1h2M7 1h2" ${S}/>`],
  axis2: [8, 9, `<circle cx="4" cy="4.500" r="3" ${F}/>`],
  axis3: [9, 9, `<path d="M1 1h6v7M1 1v7h6" ${S}/><path d="M1 1l6 7" ${S}/>`],
  snap1: [10, 10, `<path d="M1 9l4-4 1 2 3-6M6 1h3v3" ${S} stroke-dasharray="3 .5"/>`],
  snap2: [11, 10, `<path d="M1 3V1h2M8 1h2v2M10 7v2H8M3 9H1V7" ${S}/><circle cx="5.500" cy="5" r="1.800" ${S}/>`],
  wsicon: [17, 10, `<rect width="14" height="8" ${F}/><circle cx="4" cy="4" r="1.800" fill="none" stroke="#222" stroke-width="1.200"/><path d="M8 2.500l4 1.500M9 5.500h3" stroke="#222"/><path d="M14.500 9.500h2v-2z" ${F}/>`],
  mag: [10, 9, `<circle cx="6" cy="3.500" r="2.800" ${S}/><path d="M4 5.500L.8 8.500" ${S} stroke-width="1.300"/>`],
  menu: [11, 7, `<path d="M0 2h4L2 4.500z" ${F}/><path d="M4.500 1h6M4.500 3.500h6M4.500 6h6" ${S}/>`],
  tag: [11, 10, `<path d="M0 7l5.500-5.500L9 1l1 3-5.500 5.500z" ${F}/><circle cx="8" cy="3" r="1" fill="#2d2d2d"/><path d="M8 2.500L10.500 0" ${S}/>`],
  flow: [10, 9, `<path d="M3.500 0h3v3h-3zM0 6h3.500v3H0zM6.500 6H10v3H6.500z" ${F}/><path d="M5 3v1.500M1.700 6V4.500h6.600V6" ${S}/>`],
  folder: [10, 8, `<path d="M0 1.500L.8.300h3l.8 1.200H10V8H0z" fill="#a6a6a6"/>`],
  compg: [12, 9, film('#3fae84')],
  compgray: [12, 9, film('#aaa')],
  interp: [12, 9, `<path d="M3 0h9v4H3z" ${F}/><path d="M0 4h9v4H0z" ${F} stroke="#2d2d2d" stroke-width=".6"/>`],
  trash: [9, 10, `<path d="M0 1.500h9v1.300H0zM3 0h3v1.500H3zM1 3.500h7L7.300 10H1.700z" ${F}/><path d="M3.500 4v5M5.500 4v5" stroke="#2d2d2d" stroke-width=".8"/>`],
  lock: [7, 9, `<rect x=".5" y="4" width="6" height="4.500" fill="#b8b8b8"/><path d="M2 4V2.200a1.600 1.600 0 0 1 3.200 0" fill="none" stroke="#b8b8b8" stroke-width="1.100"/><path d="M3.500 5.200v2" stroke="#222"/>`],
  padlock: [8, 9, `<rect x=".5" y="4" width="7" height="5" ${F}/><path d="M2 4V2.300a2 2 0 0 1 4 0V4" ${S} stroke-width="1.200"/>`],
  mon: [11, 9, `<rect x=".5" y=".5" width="10" height="8" ${S} stroke-opacity=".7"/><path d="M3 2.500h6M3 4.500h6M3 6.500h6" ${S} stroke-opacity=".6"/>`],
  safe: [11, 9, `<rect x="1.500" y="1.500" width="8" height="6" ${S}/><path d="M5.500 0v9M0 4.500h11" ${S}/>`],
  mask: [11, 9, `<path d="M3.500.5h7v8h-10V4z" ${S} stroke-dasharray="2 1"/>`],
  photo: [11, 9, `<path d="M0 2h3l1-1.500h3L8 2h3v6.500H0z" ${F}/><circle cx="5.500" cy="5" r="2" fill="#2d2d2d"/><circle cx="5.500" cy="5" r="1" ${F}/>`],
  person: [9, 10, `<circle cx="4.500" cy="2.500" r="2" ${F}/><path d="M.5 10V6l2-1h4l2 1v4z" ${F}/>`],
  rgb: [11, 10, `<circle cx="5.500" cy="3" r="2.700" fill="#a33"/><circle cx="3" cy="6.800" r="2.700" fill="#3a3"/><circle cx="8" cy="6.800" r="2.700" fill="#44b"/><circle cx="5.500" cy="5.500" r="1.200" fill="#ccc"/>`],
  roi: [11, 9, `<rect x=".5" y=".5" width="10" height="8" ${F}/><rect x="4" y="3" width="4.500" height="3.500" fill="#2d2d2d"/>`],
  check: [10, 9, `<rect width="10" height="9" fill="#3a3a3a"/><path d="M1 1h8M1 3h8M1 5h8M1 7h8" stroke="#c8c8c8" stroke-dasharray="1 1"/><path d="M2 2h7M2 4h7M2 6h7" stroke="#c8c8c8" stroke-dasharray="1 1"/><rect x=".5" y=".5" width="9" height="8" ${S} stroke-opacity=".7"/>`],
  par: [9, 10, `<path d="M0 1h9M0 .5v2M8.500.5v2" ${S}/><rect y="3.500" width="9" height="6" ${F}/>`],
  fast: [11, 10, `<rect x=".5" y=".5" width="9" height="9" fill="#111" stroke="#aaa"/><path d="M6 1L3 5.500h2L4 9l3.500-5H5.500z" fill="#ddd"/>`],
  tl: [10, 9, `<path d="M0 1h10M1 3h8v5.500H1zM3.500 3v5M6.500 3v5" ${S}/>`],
  sun: [11, 11, `<circle cx="5.500" cy="5.500" r="3" ${F}/><path d="M5.500 0v11M0 5.500h11M1.700 1.700l7.600 7.600M9.300 1.700L1.700 9.300" ${S} stroke-width="1.200"/>`],
  stop: [8, 9, `<circle cx="4" cy="5.300" r="2.800" ${S}/><path d="M4 5.300L2.500 4M4 0v2M0 1.500l1.500 1.500M7.800 1.500L6.500 3" ${S}/>`],
  mini: [18, 10, `<path d="M1 1.500h3M1 4.500h3M1 7.500h3M13 1.500h3M13 4.500h3M13 7.500h3" ${S} stroke-width="1.600"/><path d="M5 1.500h1.500v6H5M12 1.500h-1.500v6H12M7 4.500h3" ${S}/>`],
  draft: [14, 12, `<path d="M5 5.500l4-1.500 4.500 1.500v4.500L9 12l-4-2z" ${F}/><path d="M9 7v5M5 5.500L9 7l4.500-1.500" stroke="#2d2d2d" stroke-width=".7" fill="none"/><path d="M3 0v5M.5 2.500h5" ${S}/>`],
  shy: [13, 11, `<path d="M0 6h13v5H0z" ${F}/><circle cx="6.500" cy="4" r="2.800" fill="#ccc"/><path d="M4.500 4h1M7.500 4h1" stroke="#333"/>`],
  blend: [14, 11, `<path d="M0 5l3-1v6l-3 1zM4 3l4-1v7l-4 1zM9 1.500L13.500 0v7L9 8.500z" ${F}/><path d="M1.500 3v8M6 2v8M11 0v9M0 7.500L14 3" stroke="#2d2d2d" stroke-width=".6"/>`],
  blur: [13, 12, `<circle cx="9" cy="4" r="3.800" fill="#777"/><circle cx="6.500" cy="6" r="3.800" fill="#949494"/><circle cx="4.200" cy="8" r="3.800" fill="#b8b8b8"/>`],
  brain: [14, 12, `<ellipse cx="8.500" cy="5" rx="5" ry="4.700" ${F}/><path d="M5 7l-3 2-1.500 2.500h4L7 9z" ${F}/><circle cx="8.500" cy="4.500" r="1.800" fill="#333"/>`],
  watchbig: [11, 12, `<circle cx="5.500" cy="7" r="4" ${S} stroke-width="1.500"/><circle cx="5.500" cy="7" r="2" ${F}/><path d="M3.500 1h4M5.500 1v2M1 2l1.500 1.500M10 2L8.500 3.500" ${S} stroke-width="1.200"/>`],
  graph: [14, 11, `<path d="M0 1.500h14M0 9.500h14M1.500 0v11M12.500 0v11" ${S}/><path d="M1.500 8C4 1 5.500 1 7 5s3 5 5.500 3" ${S} stroke-width="1.200"/>`],
  eye: [9, 7, `<path d="M0 4Q4.500-2 9 4 4.500 8 0 4z" fill="#999"/><circle cx="4.500" cy="3.800" r="1.600" fill="#222"/><path d="M.5 2Q4.500-1.500 8.500 2" ${S}/>`],
  speaker: [10, 9, `<path d="M0 3h2.500L5.500.5v8L2.500 6H0z" ${F}/><path d="M7 2.500q1.300 2 0 4M8.300 1q2.300 3.500 0 7" ${S}/>`],
  dot: [6, 6, `<circle cx="3" cy="3" r="2.600" ${F}/>`],
  shysw: [9, 6, `<path d="M0 4h9" ${S}/><circle cx="4.500" cy="3" r="1.800" ${F}/>`],
  sunsw: [9, 9, `<circle cx="4.500" cy="4.500" r="2" ${S}/><path d="M4.500 0v2M4.500 7v2M0 4.500h2M7 4.500h2M1.300 1.300l1 1M7.700 1.300l-1 1M1.300 7.700l1-1M7.700 7.700l-1-1" ${S} stroke-width=".8"/>`],
  slashb: [9, 9, `<path d="M1 1l7 7" ${S}/>`],
  slash: [9, 9, `<path d="M.5 8.500l8-8" stroke="#c4c4c4" stroke-width="1.300"/>`],
  film: [9, 9, `<rect width="9" height="9" ${F}/><path d="M3 1h3v3H3zM3 5h3v3H3z" fill="#2d2d2d"/><path d="M1.300 0v9M7.700 0v9" stroke="#2d2d2d" stroke-dasharray="1 1"/>`],
  blursw: [9, 9, `<circle cx="6" cy="3" r="2.700" fill="#808080"/><circle cx="3.500" cy="5.500" r="2.900" fill="#aaa"/>`],
  adj: [9, 9, `<circle cx="4.500" cy="4.500" r="3.700" ${S}/><path d="M7 1.800A3.700 3.700 0 0 1 2 7.200z" ${F}/>`],
  cube: [9, 9, `<path d="M4.500 0L8.500 2v4.500L4.500 9l-4-2.500V2z" ${F}/><path d="M.5 2l4 2 4-2M4.500 4v5" stroke="#555" stroke-width=".7" fill="none"/>`],
  star: [8, 8, `<path d="M4 .3l1.100 2.400 2.600.3-1.900 1.800.5 2.600L4 6.100 1.700 7.400l.5-2.600L.3 3l2.600-.3z" fill="#c8c8c8"/>`],
  guide: [8, 8, `<path d="M1 1h2v2H1zM5 1h2v2H5zM1 5h2v2H1zM5 5h2v2H5z" fill="none" stroke="#4aa3a0"/>`],
  whip: [9, 8, `<path d="M5 4.200a.8.8 0 1 0-1 .8 2 2 0 0 0 2.300-1.500A2.200 2.200 0 0 0 4 1.500a2.700 2.700 0 0 0-2.800 2.700A3 3 0 0 0 4.500 7Q8 7 8 1" ${S}/>`],
  cti: [10, 13, `<path d="M0 0h9v6L4.500 12 0 6z" fill="#d6b21e" stroke="#7d6610"/><path d="M2.500 3h4" stroke="#7d6610"/>`],
  shield: [9, 11, `<path d="M0 0h9v6.500L4.500 11 0 6.500z" fill="#9a9a9e"/>`],
  cbtn: [10, 9, `<path d="M0 0h5v4h4v4H0z" ${F}/><path d="M5 2h5v5H5" ${S}/><path d="M1 7l3-4" stroke="#2d2d2d"/>`],
  tg1: [10, 9, `<rect x=".5" y=".5" width="6" height="5" ${S}/><rect x="3" y="3" width="6.500" height="5.500" fill="#888" stroke="#aaa"/>`],
  tg2: [10, 9, `<path d="M.5.5h6v5h-6z" ${S}/><circle cx="6" cy="5.500" r="3" ${F}/>`],
  tg3: [8, 9, `<path d="M3 0L1.500 1.500v2L0 4.500l1.500 1v2L3 9M5 0l1.500 1.500v2l1.500 1-1.500 1v2L5 9" ${S} stroke-width="1.500"/>`],
  mt1: [7, 4, `<path d="M0 4l2-2.500L3 2.500 4.500 0 7 4z" ${F}/>`],
  mt2: [13, 7, `<path d="M0 7l4-5.500L6 4l2.500-4L13 7z" ${F}/>`],
  cursor: [11, 16, `<path d="M.5.5v12l2.800-2.500 2 4.500 2-.9-2-4.300H9z" fill="#eee" stroke="#222"/>`],
  al1: [10, 11, lines([0, 10], [0, 6], [0, 10], [0, 6], [0, 10])],
  al2: [10, 11, lines([0, 10], [2, 6], [0, 10], [2, 6], [0, 10])],
  al3: [10, 11, lines([0, 10], [4, 6], [0, 10], [4, 6], [0, 10])],
  al4: [11, 11, lines([0, 11], [0, 11], [0, 11], [0, 11], [0, 6])],
  al5: [11, 11, lines([0, 11], [0, 11], [0, 11], [0, 11], [2.5, 6])],
  al6: [11, 11, lines([0, 11], [0, 11], [0, 11], [0, 11], [5, 6])],
  al7: [11, 11, lines([0, 11], [0, 11], [0, 11], [0, 11], [0, 11])],
  in1: [13, 8, `<path d="M0 4h4M3 2.500L4.500 4 3 5.500M5.500 0v8M7 1h6M7 4h5M7 7h6" ${S}/>`],
  in2: [13, 8, `<path d="M0 1h4M5 1.500h7M5 4h8M5 7h8" ${S}/>`],
  in3: [13, 8, `<path d="M0 1h5M4 0l1.500 1L4 2.500M6 4h6M8 1.500h5M5 7h8" ${S}/>`],
  in4: [13, 8, `<path d="M0 1h6M0 4h7M0 7h6M8 0v8M13 4H9M10.500 2.500L9 4l1.500 1.500" ${S}/>`],
  in5: [13, 8, `<path d="M5 1h7M5 3.500h8M5 6h8M0 7.500h4" ${S}/>`],
  p1: [9, 8, `<path d="M0 0h1.500v8H0zM9 0v8L3 4z" ${F}/>`],
  p2: [9, 8, `<path d="M5.500 0v8L0 4zM7 0h1.500v8H7z" ${F}/>`],
  p3: [8, 8, `<path d="M0 0l7 4-7 4z" ${F}/>`],
  p4: [9, 8, `<path d="M.5 0H2v8H.500zM3.500 0L9 4 3.500 8z" ${F}/>`],
  p5: [9, 8, `<path d="M0 0l6 4-6 4zM7.500 0H9v8H7.500z" ${F}/>`],
  loop: [11, 9, `<path d="M5 2H1v6h9V4M7 2h2" ${S} stroke-width="1.400"/><path d="M5 0l4 2-4 2.500z" ${F}/>`],
  ram: [11, 8, `<path d="M0 0h1.500v8H0zM2.500 0H4v8H2.500zM5 0l6 4-6 4z" ${F}/>`],
  doc: [9, 11, `<rect x=".5" y=".5" width="8" height="10" ${F}/><path d="M2 3h5M2 5h5M2 7h5" stroke="#24303c"/>`],
  calc: [10, 12, `<rect width="10" height="12" rx="1" ${F}/><path d="M1.500 2.500h7M2 5.500h1.500M4.500 5.500H6M7 5.500h1.500M2 7.500h1.500M4.500 7.500H6M7 7.500h1.500M2 9.500h1.500M4.500 9.500H6M7 9.500h1.500" stroke="#24303c" stroke-width="1.200"/>`],
  man: [11, 12, `<circle cx="5.500" cy="1.700" r="1.200" ${S} stroke-width=".9"/><path d="M1 4h9M4.500 4v4L3.500 12M6.500 4v4l1 4M4.500 8h2" ${S} stroke-width=".9"/>`],
  palm: [13, 12, `<path d="M3 12C0 9 0 5 2 4c1 3 2 4 2 8M5 12C3 6 3 2 4.500 1 6 4 6 8 6 12M7.500 12c0-5 0-8 1.500-11 1.500 2 1.500 6-.5 11M10 12c0-3 .5-6 2.500-8 1 3 0 6-2.500 8" ${S} stroke-width=".6"/>`],
  curve: [13, 12, `<path d="M2 10c6 1 3-8 9-8" ${S}/><path d="M0 9h2.500v2H0zM11 1h2v2h-2z" ${F}/>`],
  cam2: [15, 12, `<rect x=".5" y=".5" width="8" height="8" ${S} stroke-dasharray="1.500 1"/><path d="M4 5h7v5.500H4zM11 7l4-1.500V11l-4-2z" ${F}/>`],
  wrench: [15, 9, `<path d="M0 3.500h8Q9 0 14.500.5L11 3v3l3.500 2.500Q9 9 8 6H0z" ${F}/>`],
  k1: [8, 8, `<circle cx="4" cy="4" r="2.500" ${F}/>`],
  k2: [10, 10, `<path d="M5 0l5 5-5 5-5-5z" ${F}/>`],
  k3: [10, 10, `<path d="M0 0h5l5 5-5 5H0l4.500-5z" ${F}/>`],
  k4: [10, 10, `<path d="M10 0H5L0 5l5 5h5L5.500 5z" ${F}/>`],
  k5: [10, 10, `<path d="M0 0h10L6.500 5l3.500 5H0l3.500-5z" ${F}/>`],
  k6: [10, 10, `<circle cx="5" cy="5" r="5" ${F}/>`],
  k7: [10, 10, `<rect width="10" height="10" ${F}/>`],
  plus: [10, 10, `<path d="M5 0v10M0 5h10" ${S} stroke-width="1.500"/>`],
  minus: [11, 10, `<path d="M0 5h11" ${S} stroke-width="1.500"/>`],
  vel1: [21, 11, `<path d="M1 9.500L20 2" ${S}/><rect x="8" y="3.500" width="5" height="5" ${S}/><circle cx="1.500" cy="9.500" r="1.200" ${F}/><circle cx="19.500" cy="2" r="1.200" ${F}/>`],
  vel2: [21, 7, `<path d="M1 3.500h19" ${S}/><rect x="8" y="1" width="5" height="5" ${S}/><circle cx="1.500" cy="3.500" r="1.300" ${F}/><circle cx="19.500" cy="3.500" r="1.300" ${F}/>`],
  vel3: [26, 12, `<path d="M1 5.500h14" ${S}/><rect x="5.500" y="3" width="5" height="5" ${S}/><circle cx="1.500" cy="5.500" r="1.300" ${F}/><circle cx="15" cy="5.500" r="1.300" ${F}/><path d="M18 5h7v7h-7z" ${F}/><path d="M19.500 5V2a2 2 0 0 1 4 0v3" ${S} stroke-width="1.500"/><path d="M21.500 7v3" stroke="#2d2d2d"/>`],
  getk: [21, 11, `<path d="M1 4l2-3 2 3M3 1.500q0 6 6 7" ${S}/><path d="M11 0h10l-3.500 5.500L21 11H11l3.500-5.500z" ${F}/>`],
  tick: [22, 10, `<path d="M9 4.500l4 4.500L21 0" ${S} stroke-width="1.600"/>`],
  a1: [12, 11, `<path d="M.5 0v11" ${S}/><path d="M2 1.500h5v3H2zM2 6.500h9.500v3H2z" ${F}/>`],
  a2: [12, 11, `<path d="M6 0v11" ${S}/><path d="M3.500 2h5v3h-5zM1 7h10v3H1z" ${F}/>`],
  a3: [12, 11, `<path d="M11.500 0v11" ${S}/><path d="M5.500 1.500h5v3h-5zM0 6.500h10.500v3H0z" ${F}/>`],
  a4: [14, 10, `<path d="M0 .5h14" ${S}/><path d="M2 2h3.500v8H2zM8 2h3.500v4H8z" ${F}/>`],
  a5: [14, 10, `<path d="M0 5h14" ${S}/><path d="M2.500 1H6v8H2.500zM8.500 3H12v4H8.500z" ${F}/>`],
  a6: [14, 10, `<path d="M0 9.500h14" ${S}/><path d="M2 1h3.500v8H2zM8 5h3.500v4H8z" ${F}/>`],
  b1: [13, 10, `<path d="M0 .5h13M0 6h13" ${S}/><path d="M4 1h5v2.500H4zM2 6.500h9V9H2z" ${F}/>`],
  b2: [13, 10, `<path d="M0 2.500h13M0 7.500h13" ${S}/><path d="M4 1h5v3H4zM2 6h9v3H2z" ${F}/>`],
  b3: [13, 10, `<path d="M0 4.500h13M0 9.500h13" ${S}/><path d="M4 1.500h5V4H4zM2 7h9v2.500H2z" ${F}/>`],
  b4: [13, 10, `<path d="M1.500 0v10M7.500 0v10" ${S}/><path d="M2 2.500h3v5H2zM8 3h3v4H8z" ${F}/>`],
  b5: [13, 10, `<path d="M3.500 0v10M9.500 0v10" ${S}/><path d="M2 2h3v6H2zM8 3h3v4H8z" ${F}/>`],
  b6: [13, 10, `<path d="M5.500 0v10M11.500 0v10" ${S}/><path d="M2 2.500h3v5H2zM8 3h3v4H8z" ${F}/>`]
};
const svg = n => { const [w, h, m] = ICONS[n]; return `<svg width="${w}" height="${h}" viewBox="0 0 ${w} ${h}" aria-hidden="true">${m}</svg>`; };
const ic = (n, c = '') => `<span class="${c}" data-icon="${n}"></span>`;

// project tree: [level, type, name]
const tree = [[0, '>', "__Color Set (don't rename/delete)"], [0, 'v', '__GRIDs'], [1, 'v', '_Base Grids (parametric)'], [2, 'c', '_Parametric Grids Collect'], [2, 'c', '_Parametric Grids Controlled'], [2, '>', 'Base Grid Main'], [2, 'v', 'Base Grid Middle']];
for (let i = 1; i < 9; i++) tree.push([3, 'c', 'Base Grid Middle 00' + i]);
for (const n of ['Plus', 'Points', 'Small']) tree.push([2, '>', 'Base Grid ' + n]);
for (let i = 1; i < 8; i++) tree.push([2, 'c', 'Base Grids Group 00' + i]);
document.getElementById('tree').innerHTML = tree.map(([l, t, n]) =>
  `<li class="l${l}${l === 3 && n.endsWith('001') ? ' sel1' : ''}"><span class="ar">${t === 'c' ? '' : `<i class="${t === '>' ? 'rt' : 'dn'}"></i>`}</span>${ic(t === 'c' ? 'compg' : 'folder', 'fic')}<span class="nme">${n}</span><i class="lb ${t === 'c' ? 'tan' : 'yel'}"></i></li>`).join('');

// effects
document.getElementById('fx').innerHTML = [['Segments gorizontal', '6,00'], ['Segments vertical', '6,00'], ['Distance gorizontal', '256,00'], ['Distance vertical', '256,00']].map(([n, v]) =>
  `<div class="h"><span class="c"><i class="dn"></i><em>fx</em><strong>${n}</strong></span><a class="val" href="#">Reset</a><a class="val" href="#">About...</a></div><div class="p"><span class="c"><i class="rt"></i>${ic('stop')}Slider</span><a class="val" href="#">${v}</a></div>`).join('');

// layers: [name, visible, label colour]
const L = [['Guide Grid', 0, '#7b2a86'], ['Grid Control', 1, '#dcdc50'], ['P_Grid [grid]_01', 1, '#b4c4b0'], ['P_Grid [triangle]_01', 0, '#b4c4b0'], ['P_Grid [circle]_01', 0], ['P_Grid [square]_01', 1], ['P_Grid [corner]_01', 0], ['P_Grid [corner fill]_01', 0], ['P_Grid [point 4]_01', 1], ['P_Grid [point]_01', 0], ['P_Grid [dot]_01', 1], ['P_Grid [x]_01', 0], ['P_Grid [+]_01', 1]];
const box = (c = '') => `<span class="box">${c}</span>`;
const sel = (v, a) => `<span class="sel"><select aria-label="${a}"><option>${v}</option></select></span>`;
document.getElementById('layers').innerHTML = L.map(([n, e, c = '#6a74cc'], i) =>
  `<tr class="${i === 1 ? 'selrow' : ''}"><td>${e ? ic('eye') : box()}</td><td></td><td>${e ? box() : ''}</td><td>${i ? box() : ic('padlock')}</td><td class="arc"><i class="rt"></i></td><td><div class="lab" style="background:${c}"></div></td><td class="num">${i + 1}</td><td class="nm">${i === 1 ? '<span class="nullb"></span>' : ic('star')}${i ? '' : ic('guide')}<strong>${n}</strong></td><td>${sel('Normal', 'Mode')}</td><td class="tt">${box()}</td><td class="tk">${i ? sel('None', 'Track matte') : ''}</td><td class="sws">${ic('shysw')}${i === 1 ? box() : ic('sunsw')}${ic('slash')}${i ? '<em>fx</em>' : '<span></span>'}<span></span>${box()}${box()}${box()}</td><td class="pr">${ic('whip')}${sel(i < 2 ? 'None' : '2. Grid Contr', 'Parent')}</td><td></td></tr>`).join('');
document.getElementById('bars').innerHTML = L.map((_, i) => `<div class="${['pu', 'ye', 'gr', 'gr'][i] || ''}"></div>`).join('');

// ruler
const pad = n => String(n).padStart(2, '0');
document.getElementById('ruler').innerHTML = Array.from({ length: 13 }, (_, i) => `<div>${i ? pad(Math.floor(i / 4)) + ':' + pad(i % 4 * 15) : '0:00'}s</div>`).join('');
document.getElementById('cache').innerHTML = [[6.6, 3.3, '#35a03c'], [12.7, .1], [15.7, .1], [19.2, .15], [20.3, .15], [21.5, .35], [24.6, .4], [33.3, .5, '#77799a'], [61.5, .2], [78.4, .2], [95.3, .1]].map(([l, w, c = '#1c1c1c']) => `<i style="left:${l}%;width:${w}%;background:${c}"></i>`).join('');

// composition canvas
let g = '';
const P = 95.12, X = 506.5, Y = 287.4;
for (let c = 0; c < 7; c++) g += `<path d="M${X + c * P} ${Y}V680" stroke="#8c8c8c" stroke-width="1.500"/>`;
for (let r = 0; r < 5; r++) g += `<path d="M${X} ${Y + r * P}H${X + 6 * P}" stroke="#8c8c8c" stroke-width="1.500"/>`;
for (let c = 0; c < 7; c++) for (let r = 0; r < 5; r++) {
  const x = X + c * P, y = Y + r * P;
  g += `<rect x="${Math.round(x) - 13.5}" y="${Math.round(y) - 13.5}" width="27" height="27" fill="none" stroke="#777"/><circle cx="${x}" cy="${y}" r="5.500" fill="#fff"/><path d="M${x - 7} ${y - 5.5}h3M${x + 4} ${y - 5.5}h3M${x - 7} ${y + 5.5}h3M${x + 4} ${y + 5.5}h3" stroke="#fff" stroke-width="3"/>`;
  if (r < 4) g += `<path d="M${x + 39.5} ${y + 45.3}h18M${x + 48.5} ${y + 36.3}v18" stroke="#fff" stroke-width="2.500"/>`;
}
g += `<circle cx="${X}" cy="${Y}" r="4.500" fill="#b9c06a"/><path d="M507 288h37v38h-37z" fill="none" stroke="#9da148"/>`;
for (const [x, y] of [[525, 288], [544, 288], [507, 307], [544, 307], [507, 325], [525, 325], [544, 325]]) g += `<rect x="${x - 2}" y="${y - 3}" width="5" height="5" fill="#d0d64e"/>`;
document.getElementById('canvas').innerHTML = g;

document.querySelectorAll('[data-icon]').forEach(e => e.insertAdjacentHTML('afterbegin', svg(e.dataset.icon)));
```
